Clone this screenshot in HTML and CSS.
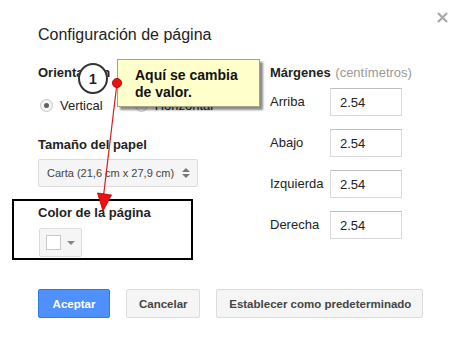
FILE: index.html
```html
<!DOCTYPE html>
<html>
<head>
    <title>Configuración de página</title>
    <link rel="stylesheet" href="styles.css">
</head>
<body>
    <div class="dialog">
        <!-- Sluitknop -->
        <span class="close-button">
            <svg width="11" height="11" viewBox="0 0 11 11"><path d="M1 1 L10 10 M10 1 L1 10" stroke="#a8a8a8" stroke-width="2.2"/></svg>
        </span>

        <h1 class="title">Configuración de página</h1>

        <div class="columns">
            <!-- Linkerkolom -->
            <div class="col-left">
                <h2 class="label-head">Orientación</h2>
                <div class="radio-row">
                    <span class="radio checked"></span>
                    <span class="radio-label">Vertical</span>
                    <span class="radio second"></span>
                    <span class="radio-label">Horizontal</span>
                </div>

                <h2 class="label-head paper-head">Tamaño del papel</h2>
                <div class="select-box">
                    <span>Carta (21,6 cm x 27,9 cm)</span>
                    <span class="spin">
                        <span class="up"></span>
                        <span class="down"></span>
                    </span>
                </div>

                <h2 class="label-head color-head">Color de la página</h2>
                <div class="color-button">
                    <span class="swatch"></span>
                    <span class="caret"></span>
                </div>
            </div>

            <!-- Rechterkolom -->
            <div class="col-right">
                <h2 class="label-head">Márgenes <span class="unit">(centímetros)</span></h2>
                <div class="margin-row">
                    <span class="margin-label">Arriba</span>
                    <span class="margin-input">2.54</span>
                </div>
                <div class="margin-row">
                    <span class="margin-label">Abajo</span>
                    <span class="margin-input">2.54</span>
                </div>
                <div class="margin-row">
                    <span class="margin-label">Izquierda</span>
                    <span class="margin-input">2.54</span>
                </div>
                <div class="margin-row">
                    <span class="margin-label">Derecha</span>
                    <span class="margin-input">2.54</span>
                </div>
            </div>
        </div>

        <div class="button-row">
            <button class="btn btn-primary">Aceptar</button>
            <button class="btn">Cancelar</button>
            <button class="btn">Establecer como predeterminado</button>
        </div>

        <!-- Annotaties bovenop het dialoog -->
        <div class="note-box"></div>
        <div class="step">1</div>
        <div class="callout">Aquí se cambia<br>de valor.</div>
        <svg class="pointer" width="461" height="347" viewBox="0 0 461 347">
            <line x1="117" y1="83" x2="103.5" y2="196" stroke="#d81c1c" stroke-width="1.2"/>
            <polygon points="97.5,193 111.5,195 103,211" fill="#ee1111" stroke="#b00000" stroke-width="0.8"/>
            <circle cx="117" cy="83" r="4.6" fill="#ee1111" stroke="#a00000" stroke-width="0.8"/>
        </svg>
    </div>
</body>
</html>
```

FILE: styles.css
```css
body {
    margin: 0;
    padding: 0;
    background-color: #ffffff;
    color: #222222;
    font-family: "Liberation Sans", Arial, sans-serif;
}

.dialog {
    position: relative;
    width: 461px;
    height: 347px;
    box-sizing: border-box;
    padding: 25px 38px 0 38px;
}

.close-button {
    position: absolute;
    left: 437px;
    top: 12px;
    width: 11px;
    height: 11px;
}

.close-button svg {
    display: block;
}

.title {
    margin: 0;
    font-size: 16px;
    line-height: 20px;
    font-weight: normal;
    color: #222;
}

.columns {
    display: flex;
    gap: 72px;
    margin-top: 20px;
}

.col-left {
    width: 160px;
    flex-shrink: 0;
}

.label-head {
    margin: 0;
    font-size: 13px;
    line-height: 16px;
    font-weight: bold;
    color: #222;
    white-space: nowrap;
}

.unit {
    font-weight: normal;
    color: #999;
    margin-left: 1px;
}

/* Radioknoppen */
.radio-row {
    display: flex;
    align-items: center;
    height: 16px;
    margin-top: 16px;
    font-size: 13px;
    white-space: nowrap;
}

.radio {
    display: inline-block;
    flex-shrink: 0;
    width: 13px;
    height: 13px;
    box-sizing: border-box;
    border: 1px solid #c6c6c6;
    border-radius: 50%;
    background-color: #f3f3f3;
    margin-left: 2px;
    position: relative;
}

.radio.checked::after {
    content: "";
    position: absolute;
    left: 3px;
    top: 3px;
    width: 5px;
    height: 5px;
    border-radius: 50%;
    background-color: #606060;
}

.radio.second {
    margin-left: 32px;
}

.radio-label {
    flex-shrink: 0;
    margin-left: 7px;
    color: #222;
}

.paper-head {
    margin-top: 24px;
}

/* Papierformaat */
.select-box {
    display: flex;
    align-items: center;
    justify-content: space-between;
    width: 160px;
    height: 28px;
    box-sizing: border-box;
    margin-top: 6px;
    padding: 0 7px 0 8px;
    border: 1px solid #dcdcdc;
    border-radius: 2px;
    background-color: #f5f5f5;
    font-size: 11px;
    color: #444;
    white-space: nowrap;
}

.spin {
    display: flex;
    flex-direction: column;
    gap: 2px;
}

.spin .up,
.spin .down {
    width: 0;
    height: 0;
    border-left: 4px solid transparent;
    border-right: 4px solid transparent;
}

.spin .up {
    border-bottom: 4px solid #777;
}

.spin .down {
    border-top: 4px solid #777;
}

.color-head {
    margin-top: 18px;
}

/* Kleurknop */
.color-button {
    display: flex;
    align-items: center;
    width: 43px;
    height: 29px;
    box-sizing: border-box;
    margin-top: 7px;
    margin-left: 1px;
    padding-left: 6px;
    border: 1px solid #dcdcdc;
    border-radius: 2px;
    background-color: #f5f5f5;
}

.swatch {
    width: 15px;
    height: 15px;
    box-sizing: border-box;
    border: 1px solid #c8c8c8;
    background-color: #ffffff;
}

.caret {
    margin-left: 6px;
    width: 0;
    height: 0;
    border-left: 4px solid transparent;
    border-right: 4px solid transparent;
    border-top: 4px solid #888;
}

/* Marges */
.margin-row {
    display: flex;
    align-items: center;
    margin-top: 13px;
}

.col-right .label-head + .margin-row {
    margin-top: 7px;
}

.margin-label {
    width: 60px;
    font-size: 13px;
    line-height: 16px;
    color: #222;
}

.margin-input {
    display: flex;
    align-items: center;
    width: 72px;
    height: 28px;
    box-sizing: border-box;
    padding-left: 9px;
    border: 1px solid #d9d9d9;
    border-top-color: #c0c0c0;
    background-color: #fff;
    font-size: 13px;
    color: #222;
}

/* Knoppen onderaan */
.button-row {
    display: flex;
    gap: 16px;
    margin-top: 32px;
}

.btn {
    min-width: 72px;
    height: 29px;
    box-sizing: border-box;
    padding: 0 12px;
    border: 1px solid #dcdcdc;
    border-radius: 2px;
    background-color: #f5f5f5;
    color: #444;
    font-family: "Liberation Sans", Arial, sans-serif;
    font-size: 11.5px;
    font-weight: bold;
    white-space: nowrap;
    cursor: pointer;
}

.btn-primary {
    background-color: #4d90fe;
    border-color: #3079ed;
    color: #ffffff;
}

/* Annotaties */
.note-box {
    position: absolute;
    left: 12px;
    top: 199px;
    width: 181px;
    height: 61px;
    box-sizing: border-box;
    border: 2px solid #000;
}

.step {
    position: absolute;
    left: 78px;
    top: 63px;
    width: 30px;
    height: 31px;
    box-sizing: border-box;
    border: 2px solid #333;
    border-radius: 50%;
    background-color: #fff;
    display: flex;
    align-items: center;
    justify-content: center;
    font-size: 14px;
    font-weight: bold;
    color: #222;
}

.callout {
    position: absolute;
    left: 117px;
    top: 59px;
    width: 143px;
    height: 48px;
    box-sizing: border-box;
    padding: 7px 0 0 17px;
    border: 1px solid #a3a38a;
    background-color: #ffffcc;
    box-shadow: 3px 3px 2px rgba(0, 0, 0, 0.45);
    font-size: 14px;
    line-height: 17px;
    font-weight: bold;
    color: #111;
}

.pointer {
    position: absolute;
    left: 0;
    top: 0;
    pointer-events: none;
}
```
